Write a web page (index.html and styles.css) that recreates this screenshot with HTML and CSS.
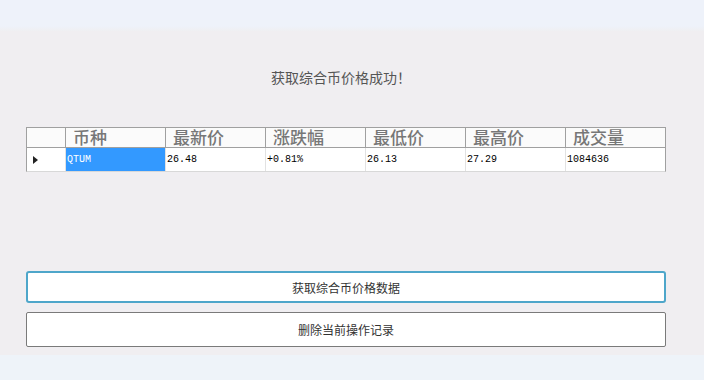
FILE: index.html
```html
<!DOCTYPE html>
<html lang="zh">
<head>
<meta charset="utf-8">
<link rel="stylesheet" href="styles.css">
</head>
<body>
<div class="top"></div>
<div class="panel">
  <div class="msg">获取综合币价格成功！</div>
  <div class="grid">
    <div class="row head">
      <div class="rh"></div>
      <div class="c">币种</div>
      <div class="c">最新价</div>
      <div class="c">涨跌幅</div>
      <div class="c">最低价</div>
      <div class="c">最高价</div>
      <div class="c">成交量</div>
    </div>
    <div class="row data">
      <div class="rh"><span class="tri"></span></div>
      <div class="c sel">QTUM</div>
      <div class="c">26.48</div>
      <div class="c">+0.81%</div>
      <div class="c">26.13</div>
      <div class="c">27.29</div>
      <div class="c">1084636</div>
    </div>
  </div>
  <button class="btn primary">获取综合币价格数据</button>
  <button class="btn second">删除当前操作记录</button>
</div>
<div class="bottom"></div>
</body>
</html>
```
FILE: styles.css
```css
html, body {
  margin: 0;
  padding: 0;
  background: #eef2f9;
  font-family: "Noto Sans CJK SC", "Noto Sans", sans-serif;
}
.top {
  height: 31px;
  background: linear-gradient(#eef2fa 0, #eef2fa 26px, #efeff2 31px);
}
.panel {
  height: 324px;
  box-sizing: border-box;
  background: #f0eef1;
  padding: 0 38px 0 26px;
  display: flex;
  flex-direction: column;
}
.msg {
  margin-top: 36px;
  height: 20px;
  line-height: 20px;
  font-size: 14px;
  color: #555;
  text-align: center;
  padding-right: 10px;
}
.grid {
  margin-top: 40px;
  width: 640px;
  border: 1px solid #a0a0a0;
  border-bottom-color: #d8d8d8;
  box-sizing: border-box;
  background: #fff;
}
.row {
  display: flex;
}
.rh {
  width: 38px;
  flex: none;
  display: flex;
  align-items: center;
  padding-left: 6px;
  box-sizing: border-box;
}
.c {
  width: 100px;
  flex: none;
  box-sizing: border-box;
  border-left: 1px solid #a0a0a0;
  white-space: nowrap;
}
.head {
  height: 19px;
  background: #fbfbfb;
  border-bottom: 1px solid #a0a0a0;
}
.head .c {
  font-size: 17px;
  line-height: 18px;
  font-weight: 500;
  color: #777;
  padding-left: 7px;
}
.data {
  height: 23px;
}
.data .c {
  border-left-color: #e2e2e2;
  font-family: "Liberation Mono", "DejaVu Sans Mono", monospace;
  font-size: 10px;
  line-height: 23px;
  color: #000;
  padding-left: 1px;
}
.data .c:first-of-type {
  border-left-color: #a0a0a0;
}
.data .c.sel {
  background: #3399ff;
  color: #fff;
}
.tri {
  width: 0;
  height: 0;
  border-top: 4px solid transparent;
  border-bottom: 4px solid transparent;
  border-left: 5px solid #222;
}
.btn {
  width: 640px;
  box-sizing: border-box;
  background: #fff;
  font-family: "Noto Sans CJK SC", "Noto Sans", sans-serif;
  font-size: 12px;
  color: #333;
  padding: 0;
}
.primary {
  margin-top: 99px;
  height: 32px;
  border: 2px solid #4ea6ca;
  border-radius: 3px;
}
.second {
  margin-top: 9px;
  height: 35px;
  border: 1px solid #7a7a7a;
  border-radius: 2px;
}
.bottom {
  height: 25px;
  background: #eef3f9;
}
```
